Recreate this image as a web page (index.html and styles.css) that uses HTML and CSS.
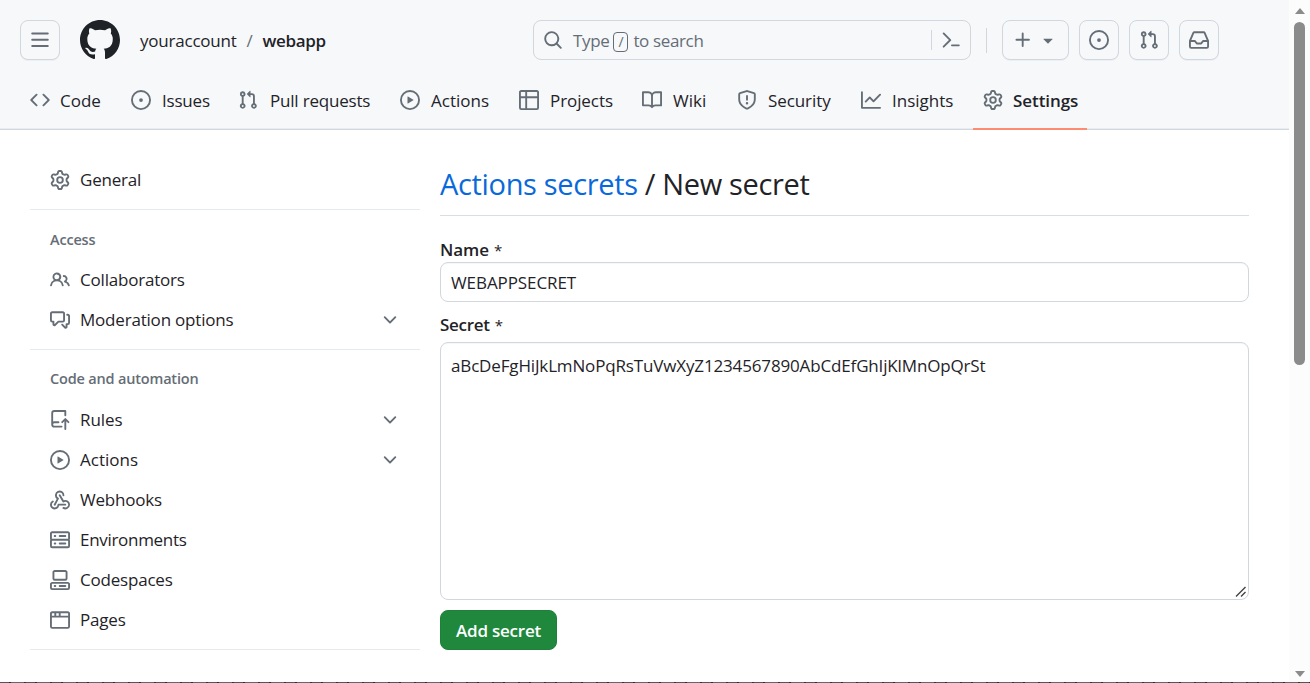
FILE: index.html
```html
<!DOCTYPE html>
<html lang="en">
<head>
<meta charset="utf-8">
<title>New secret</title>
<link rel="stylesheet" href="styles.css">
</head>
<body>
<svg class="sprite" aria-hidden="true">
<symbol id="bars" viewBox="0 0 16 16"><path d="M1 2.75A.75.75 0 0 1 1.75 2h12.5a.75.75 0 0 1 0 1.5H1.75A.75.75 0 0 1 1 2.75Zm0 5A.75.75 0 0 1 1.75 7h12.5a.75.75 0 0 1 0 1.5H1.75A.75.75 0 0 1 1 7.75ZM1.75 12h12.5a.75.75 0 0 1 0 1.5H1.75a.75.75 0 0 1 0-1.5Z"/></symbol>
<symbol id="mark" viewBox="0 0 16 16"><path d="M8 0c4.42 0 8 3.58 8 8a8.013 8.013 0 0 1-5.45 7.59c-.4.08-.55-.17-.55-.38 0-.27.01-1.13.01-2.2 0-.75-.25-1.23-.54-1.48 1.78-.2 3.65-.88 3.65-3.95 0-.88-.31-1.59-.82-2.15.08-.2.36-1.02-.08-2.12 0 0-.67-.22-2.2.82-.64-.18-1.32-.27-2-.27-.68 0-1.36.09-2 .27-1.53-1.03-2.2-.82-2.2-.82-.44 1.1-.16 1.92-.08 2.12-.51.56-.82 1.28-.82 2.15 0 3.06 1.86 3.75 3.64 3.95-.23.2-.44.55-.51 1.07-.46.21-1.61.55-2.33-.66-.15-.24-.6-.83-1.23-.82-.67.01-.27.38.01.53.34.19.73.9.82 1.13.16.45.68 1.31 2.69.94 0 .67.01 1.3.01 1.49 0 .21-.15.45-.55.38A7.995 7.995 0 0 1 0 8c0-4.42 3.58-8 8-8Z"/></symbol>
<symbol id="code" viewBox="0 0 16 16"><path d="m11.28 3.22 4.25 4.25a.75.75 0 0 1 0 1.06l-4.25 4.25a.749.749 0 0 1-1.275-.326.749.749 0 0 1 .215-.734L13.94 8l-3.72-3.72a.749.749 0 0 1 .326-1.275.749.749 0 0 1 .734.215Zm-6.56 0a.751.751 0 0 1 1.042.018.751.751 0 0 1 .018 1.042L2.06 8l3.72 3.72a.749.749 0 0 1-.326 1.275.749.749 0 0 1-.734-.215L.47 8.53a.75.75 0 0 1 0-1.06Z"/></symbol>
<symbol id="issue" viewBox="0 0 16 16"><path d="M8 9.5a1.5 1.5 0 1 0 0-3 1.5 1.5 0 0 0 0 3Z"/><path d="M8 0a8 8 0 1 1 0 16A8 8 0 0 1 8 0ZM1.5 8a6.5 6.5 0 1 0 13 0 6.5 6.5 0 0 0-13 0Z"/></symbol>
<symbol id="pull" viewBox="0 0 16 16"><path d="M1.5 3.25a2.25 2.25 0 1 1 3 2.122v5.256a2.251 2.251 0 1 1-1.5 0V5.372A2.25 2.25 0 0 1 1.5 3.25Zm5.677-.177L9.573.677A.25.25 0 0 1 10 .854V2.5h1A2.5 2.5 0 0 1 13.5 5v5.628a2.251 2.251 0 1 1-1.5 0V5a1 1 0 0 0-1-1h-1v1.646a.25.25 0 0 1-.427.177L7.177 3.427a.25.25 0 0 1 0-.354ZM3.75 2.5a.75.75 0 1 0 0 1.5.75.75 0 0 0 0-1.5Zm0 9.5a.75.75 0 1 0 0 1.5.75.75 0 0 0 0-1.5Zm8.25.75a.75.75 0 1 0 1.5 0 .75.75 0 0 0-1.5 0Z"/></symbol>
<symbol id="play" viewBox="0 0 16 16"><path d="M8 0a8 8 0 1 1 0 16A8 8 0 0 1 8 0ZM1.5 8a6.5 6.5 0 1 0 13 0 6.5 6.5 0 0 0-13 0Zm4.879-2.773 4.264 2.559a.25.25 0 0 1 0 .428l-4.264 2.559A.25.25 0 0 1 6 10.559V5.442a.25.25 0 0 1 .379-.215Z"/></symbol>
<symbol id="table" viewBox="0 0 16 16"><path d="M0 1.75C0 .784.784 0 1.75 0h12.5C15.216 0 16 .784 16 1.75v12.5A1.75 1.75 0 0 1 14.25 16H1.75A1.75 1.75 0 0 1 0 14.25ZM6.5 6.5v8h7.75a.25.25 0 0 0 .25-.25V6.5Zm8-1.5V1.75a.25.25 0 0 0-.25-.25H6.5V5Zm-13 1.5v7.75c0 .138.112.25.25.25H5v-8ZM5 5V1.5H1.75a.25.25 0 0 0-.25.25V5Z"/></symbol>
<symbol id="book" viewBox="0 0 16 16"><path d="M0 1.75A.75.75 0 0 1 .75 1h4.253c1.227 0 2.317.59 3 1.501A3.743 3.743 0 0 1 11.006 1h4.245a.75.75 0 0 1 .75.75v10.5a.75.75 0 0 1-.75.75h-4.507a2.25 2.25 0 0 0-1.591.659l-.622.621a.75.75 0 0 1-1.06 0l-.622-.621A2.25 2.25 0 0 0 5.258 13H.75a.75.75 0 0 1-.75-.75Zm7.251 10.324.004-5.073-.002-2.253A2.25 2.25 0 0 0 5.003 2.5H1.5v9h3.757a3.75 3.75 0 0 1 1.994.574ZM8.755 4.75l-.004 7.322a3.752 3.752 0 0 1 1.992-.572H14.5v-9h-3.495a2.25 2.25 0 0 0-2.25 2.25Z"/></symbol>
<symbol id="shield" viewBox="0 0 16 16"><path d="M7.467.133a1.748 1.748 0 0 1 1.066 0l5.25 1.68A1.75 1.75 0 0 1 15 3.48V7c0 1.566-.32 3.182-1.303 4.682-.983 1.498-2.585 2.813-5.032 3.855a1.697 1.697 0 0 1-1.33 0c-2.447-1.042-4.049-2.357-5.032-3.855C1.32 10.182 1 8.566 1 7V3.48a1.755 1.755 0 0 1 1.217-1.667Zm.61 1.429a.25.25 0 0 0-.153 0l-5.25 1.68a.25.25 0 0 0-.174.238V7c0 1.358.275 2.666 1.057 3.86.784 1.194 2.121 2.34 4.366 3.297a.196.196 0 0 0 .154 0c2.245-.956 3.582-2.104 4.366-3.298C13.225 9.666 13.5 8.36 13.5 7V3.48a.251.251 0 0 0-.174-.237l-5.25-1.68ZM8.75 4.75v3a.75.75 0 0 1-1.5 0v-3a.75.75 0 0 1 1.5 0ZM9 10.5a1 1 0 1 1-2 0 1 1 0 0 1 2 0Z"/></symbol>
<symbol id="graph" viewBox="0 0 16 16"><path d="M1.5 1.75V13.5h13.75a.75.75 0 0 1 0 1.5H.75a.75.75 0 0 1-.75-.75V1.75a.75.75 0 0 1 1.5 0Zm14.28 2.53-5.25 5.25a.75.75 0 0 1-1.06 0L7 7.06 4.28 9.78a.751.751 0 0 1-1.042-.018.751.751 0 0 1-.018-1.042l3.25-3.25a.75.75 0 0 1 1.06 0L10 7.94l4.72-4.72a.751.751 0 0 1 1.042.018.751.751 0 0 1 .018 1.042Z"/></symbol>
<symbol id="gear" viewBox="0 0 16 16"><path d="M8 0a8.2 8.2 0 0 1 .701.031C9.444.095 9.99.645 10.16 1.29l.288 1.107c.018.066.079.158.212.224.231.114.454.243.668.386.123.082.233.09.299.071l1.103-.303c.644-.176 1.392.021 1.82.63.27.385.506.792.704 1.218.315.675.111 1.422-.364 1.891l-.814.806c-.049.048-.098.147-.088.294.016.257.016.515 0 .772-.01.147.038.246.088.294l.814.806c.475.469.679 1.216.364 1.891a7.977 7.977 0 0 1-.704 1.217c-.428.61-1.176.807-1.82.63l-1.102-.302c-.067-.019-.177-.011-.3.071a5.909 5.909 0 0 1-.668.386c-.133.066-.194.158-.211.224l-.29 1.106c-.168.646-.715 1.196-1.458 1.26a8.006 8.006 0 0 1-1.402 0c-.743-.064-1.289-.614-1.458-1.26l-.289-1.106c-.018-.066-.079-.158-.212-.224a5.738 5.738 0 0 1-.668-.386c-.123-.082-.233-.09-.299-.071l-1.103.303c-.644.176-1.392-.021-1.82-.63a8.12 8.12 0 0 1-.704-1.218c-.315-.675-.111-1.422.363-1.891l.815-.806c.05-.048.098-.147.088-.294a6.214 6.214 0 0 1 0-.772c.01-.147-.038-.246-.088-.294l-.815-.806C.635 6.045.431 5.298.746 4.623a7.92 7.92 0 0 1 .704-1.217c.428-.61 1.176-.807 1.82-.63l1.102.302c.067.019.177.011.3-.071.214-.143.437-.272.668-.386.133-.066.194-.158.211-.224l.29-1.106C6.009.645 6.556.095 7.299.03 7.53.01 7.764 0 8 0Zm-.571 1.525c-.036.003-.108.036-.137.146l-.289 1.105c-.147.561-.549.967-.998 1.189-.173.086-.34.183-.5.29-.417.278-.97.423-1.529.27l-1.103-.303c-.109-.03-.175.016-.195.045-.22.312-.412.644-.573.99-.014.031-.021.11.059.19l.815.806c.411.406.562.957.53 1.456a4.709 4.709 0 0 0 0 .582c.032.499-.119 1.05-.53 1.456l-.815.806c-.081.08-.073.159-.059.19.162.346.353.677.573.989.02.03.085.076.195.046l1.102-.303c.56-.153 1.113-.008 1.53.27.161.107.328.204.501.29.447.222.85.629.997 1.189l.289 1.105c.029.109.101.143.137.146a6.6 6.6 0 0 0 1.142 0c.036-.003.108-.036.137-.146l.289-1.105c.147-.561.549-.967.998-1.189.173-.086.34-.183.5-.29.417-.278.97-.423 1.529-.27l1.103.303c.109.029.175-.016.195-.045.22-.313.411-.644.573-.99.014-.031.021-.11-.059-.19l-.815-.806c-.411-.406-.562-.957-.53-1.456a4.709 4.709 0 0 0 0-.582c-.032-.499.119-1.05.53-1.456l.815-.806c.081-.08.073-.159.059-.19a6.464 6.464 0 0 0-.573-.989c-.02-.03-.085-.076-.195-.046l-1.102.303c-.56.153-1.113.008-1.53-.27a4.44 4.44 0 0 0-.501-.29c-.447-.222-.85-.629-.997-1.189l-.289-1.105c-.029-.11-.101-.143-.137-.146a6.6 6.6 0 0 0-1.142 0ZM11 8a3 3 0 1 1-6 0 3 3 0 0 1 6 0ZM9.5 8a1.5 1.5 0 1 0-3.001.001A1.5 1.5 0 0 0 9.5 8Z"/></symbol>
<symbol id="search" viewBox="0 0 16 16"><path d="M10.68 11.74a6 6 0 0 1-7.922-8.982 6 6 0 0 1 8.982 7.922l3.04 3.04a.749.749 0 0 1-.326 1.275.749.749 0 0 1-.734-.215ZM11.5 7a4.499 4.499 0 1 0-8.997 0A4.499 4.499 0 0 0 11.5 7Z"/></symbol>
<symbol id="prompt" viewBox="0 0 16 16"><path d="m6.354 8.04-4.773 4.773a.75.75 0 1 0 1.061 1.06L7.945 8.57a.75.75 0 0 0 0-1.06L2.642 2.206a.75.75 0 0 0-1.06 1.061L6.353 8.04ZM8.75 11.5a.75.75 0 0 0 0 1.5h5.5a.75.75 0 0 0 0-1.5h-5.5Z"/></symbol>
<symbol id="plus" viewBox="0 0 16 16"><path d="M7.75 2a.75.75 0 0 1 .75.75V7h4.25a.75.75 0 0 1 0 1.5H8.5v4.25a.75.75 0 0 1-1.5 0V8.5H2.75a.75.75 0 0 1 0-1.5H7V2.75A.75.75 0 0 1 7.75 2Z"/></symbol>
<symbol id="caret" viewBox="0 0 16 16"><path d="m4.427 7.427 3.396 3.396a.25.25 0 0 0 .354 0l3.396-3.396A.25.25 0 0 0 11.396 7H4.604a.25.25 0 0 0-.177.427Z"/></symbol>
<symbol id="inbox" viewBox="0 0 16 16"><path d="M2.8 2.06A1.75 1.75 0 0 1 4.41 1h7.18c.7 0 1.333.417 1.61 1.06l2.74 6.395c.04.093.06.194.06.295v4.5A1.75 1.75 0 0 1 14.25 15H1.75A1.75 1.75 0 0 1 0 13.25v-4.5c0-.101.02-.202.06-.295Zm1.61.44a.25.25 0 0 0-.23.152L1.887 8H4.75a.75.75 0 0 1 .6.3L6.625 10h2.75l1.275-1.7a.75.75 0 0 1 .6-.3h2.863L11.82 2.652a.25.25 0 0 0-.23-.152Zm10.09 7h-2.875l-1.275 1.7a.75.75 0 0 1-.6.3h-3.5a.75.75 0 0 1-.6-.3L4.375 9.5H1.5v3.75c0 .138.112.25.25.25h12.5a.25.25 0 0 0 .25-.25Z"/></symbol>
<symbol id="people" viewBox="0 0 16 16"><path d="M2 5.5a3.5 3.5 0 1 1 5.898 2.549 5.508 5.508 0 0 1 3.034 4.084.75.75 0 1 1-1.482.235 4 4 0 0 0-7.9 0 .75.75 0 0 1-1.482-.236A5.507 5.507 0 0 1 3.102 8.05 3.493 3.493 0 0 1 2 5.5ZM11 4a3.001 3.001 0 0 1 2.22 5.018 5.01 5.01 0 0 1 2.56 3.012.749.749 0 0 1-.885.954.752.752 0 0 1-.549-.514 3.507 3.507 0 0 0-2.522-2.372.75.75 0 0 1-.574-.73v-.352a.75.75 0 0 1 .416-.672A1.5 1.5 0 0 0 11 5.5.75.75 0 0 1 11 4Zm-5.5-.5a2 2 0 1 0-.001 3.999A2 2 0 0 0 5.5 3.5Z"/></symbol>
<symbol id="discussion" viewBox="0 0 16 16"><path d="M1.75 1h8.5c.966 0 1.75.784 1.75 1.75v5.5A1.75 1.75 0 0 1 10.25 10H7.061l-2.574 2.573A1.458 1.458 0 0 1 2 11.543V10h-.25A1.75 1.75 0 0 1 0 8.25v-5.5C0 1.784.784 1 1.75 1ZM1.5 2.75v5.5c0 .138.112.25.25.25h1a.75.75 0 0 1 .75.75v2.19l2.72-2.72a.749.749 0 0 1 .53-.22h3.5a.25.25 0 0 0 .25-.25v-5.5a.25.25 0 0 0-.25-.25h-8.5a.25.25 0 0 0-.25.25Zm13 2a.25.25 0 0 0-.25-.25h-.5a.75.75 0 0 1 0-1.5h.5c.966 0 1.75.784 1.75 1.75v5.5A1.75 1.75 0 0 1 14.25 12H14v1.543a1.458 1.458 0 0 1-2.487 1.03L9.22 12.28a.749.749 0 0 1 .326-1.275.749.749 0 0 1 .734.215l2.22 2.22v-2.19a.75.75 0 0 1 .75-.75h1a.25.25 0 0 0 .25-.25Z"/></symbol>
<symbol id="push" viewBox="0 0 16 16"><path d="M1 2.5A2.5 2.5 0 0 1 3.5 0h8.75a.75.75 0 0 1 .75.75v3.5a.75.75 0 0 1-1.5 0V1.5h-8a1 1 0 0 0-1 1v6.708A2.493 2.493 0 0 1 3.5 9h3.25a.75.75 0 0 1 0 1.5H3.5a1 1 0 0 0 0 2h5.75a.75.75 0 0 1 0 1.5H3.5A2.5 2.5 0 0 1 1 11.5Zm13.23 7.79h-.001l-1.224-1.224v6.184a.75.75 0 0 1-1.5 0V9.066L10.28 10.29a.75.75 0 0 1-1.06-1.061l2.505-2.504a.75.75 0 0 1 1.06 0L15.29 9.23a.751.751 0 0 1-.018 1.042.751.751 0 0 1-1.042.018Z"/></symbol>
<symbol id="webhook" viewBox="0 0 16 16"><path d="M5.5 4.25a2.25 2.25 0 0 1 4.5 0 .75.75 0 0 0 1.5 0 3.75 3.75 0 1 0-6.14 2.889l-2.272 4.258a.75.75 0 0 0 1.324.706L7 7.25a.75.75 0 0 0-.309-1.015A2.25 2.25 0 0 1 5.5 4.25Z"/><path d="M7.364 3.607a.75.75 0 0 1 1.03.257l2.608 4.349a3.75 3.75 0 1 1-.628 6.785.75.75 0 0 1 .752-1.299 2.25 2.25 0 1 0-.033-3.88.75.75 0 0 1-1.03-.256L7.107 4.636a.75.75 0 0 1 .257-1.03Z"/><path d="M2.9 8.776A.75.75 0 0 1 2.625 9.8 2.25 2.25 0 1 0 6 11.75a.75.75 0 0 1 .75-.751h5.5a.75.75 0 0 1 0 1.5H7.425a3.751 3.751 0 1 1-5.55-3.998.75.75 0 0 1 1.024.274Z"/></symbol>
<symbol id="server" viewBox="0 0 16 16"><path d="M1.75 1h12.5c.966 0 1.75.784 1.75 1.75v4c0 .372-.116.717-.314 1 .198.283.314.628.314 1v4a1.75 1.75 0 0 1-1.75 1.75H1.75A1.75 1.75 0 0 1 0 12.75v-4c0-.358.109-.707.314-1a1.739 1.739 0 0 1-.314-1v-4C0 1.784.784 1 1.75 1ZM1.5 2.75v4c0 .138.112.25.25.25h12.5a.25.25 0 0 0 .25-.25v-4a.25.25 0 0 0-.25-.25H1.75a.25.25 0 0 0-.25.25Zm.25 5.75a.25.25 0 0 0-.25.25v4c0 .138.112.25.25.25h12.5a.25.25 0 0 0 .25-.25v-4a.25.25 0 0 0-.25-.25ZM7 4.75A.75.75 0 0 1 7.75 4h4.5a.75.75 0 0 1 0 1.5h-4.5A.75.75 0 0 1 7 4.75ZM7.75 10h4.5a.75.75 0 0 1 0 1.5h-4.5a.75.75 0 0 1 0-1.5ZM3 4.75A.75.75 0 0 1 3.75 4h.5a.75.75 0 0 1 0 1.5h-.5A.75.75 0 0 1 3 4.75ZM3.75 10h.5a.75.75 0 0 1 0 1.5h-.5a.75.75 0 0 1 0-1.5Z"/></symbol>
<symbol id="codespaces" viewBox="0 0 16 16"><path d="M0 11.25c0-.966.784-1.75 1.75-1.75h12.5c.966 0 1.75.784 1.75 1.75v3A1.75 1.75 0 0 1 14.25 16H1.75A1.75 1.75 0 0 1 0 14.25Zm2-9.5C2 .784 2.784 0 3.75 0h8.5C13.216 0 14 .784 14 1.75v5a1.75 1.75 0 0 1-1.75 1.75h-8.5A1.75 1.75 0 0 1 2 6.75Zm1.75-.25a.25.25 0 0 0-.25.25v5c0 .138.112.25.25.25h8.5a.25.25 0 0 0 .25-.25v-5a.25.25 0 0 0-.25-.25Zm-2 9.5a.25.25 0 0 0-.25.25v3c0 .138.112.25.25.25h12.5a.25.25 0 0 0 .25-.25v-3a.25.25 0 0 0-.25-.25Z"/><path d="M7 12.75a.75.75 0 0 1 .75-.75h4.5a.75.75 0 0 1 0 1.5h-4.5a.75.75 0 0 1-.75-.75Zm-4 0a.75.75 0 0 1 .75-.75h.5a.75.75 0 0 1 0 1.5h-.5a.75.75 0 0 1-.75-.75Z"/></symbol>
<symbol id="browser" viewBox="0 0 16 16"><path d="M0 2.75C0 1.784.784 1 1.75 1h12.5c.966 0 1.75.784 1.75 1.75v10.5A1.75 1.75 0 0 1 14.25 15H1.75A1.75 1.75 0 0 1 0 13.25ZM14.5 6h-13v7.25c0 .138.112.25.25.25h12.5a.25.25 0 0 0 .25-.25Zm-6-3.5v2h6V2.75a.25.25 0 0 0-.25-.25ZM5 2.5v2h2v-2Zm-3.25 0a.25.25 0 0 0-.25.25V4.5h2v-2Z"/></symbol>
<symbol id="chevron" viewBox="0 0 16 16"><path d="M12.78 5.22a.749.749 0 0 1 0 1.06l-4.25 4.25a.749.749 0 0 1-1.06 0L3.22 6.28a.749.749 0 1 1 1.06-1.06L8 8.939l3.72-3.719a.749.749 0 0 1 1.06 0Z"/></symbol>
</svg>
<div class="window">
  <div class="page">
    <header class="header">
      <div class="topbar">
        <button class="btn"><svg class="icon"><use href="#bars"/></svg></button>
        <svg class="logo"><use href="#mark"/></svg>
        <div class="crumbs"><a class="owner">youraccount</a><span class="sep">/</span><a class="repo">webapp</a></div>
        <div class="search">
          <svg class="icon"><use href="#search"/></svg>
          <span class="hint"><span>Type</span><kbd>/</kbd><span>to search</span></span>
          <span class="rule"></span>
          <svg class="icon"><use href="#prompt"/></svg>
        </div>
        <span class="divider"></span>
        <div class="actions">
          <button class="btn create"><svg class="icon"><use href="#plus"/></svg><svg class="icon"><use href="#caret"/></svg></button>
          <button class="btn"><svg class="icon"><use href="#issue"/></svg></button>
          <button class="btn"><svg class="icon"><use href="#pull"/></svg></button>
          <button class="btn"><svg class="icon"><use href="#inbox"/></svg></button>
        </div>
      </div>
      <nav class="tabs">
        <a class="tab"><svg class="icon"><use href="#code"/></svg><span>Code</span></a>
        <a class="tab"><svg class="icon"><use href="#issue"/></svg><span class="tight">Issues</span></a>
        <a class="tab"><svg class="icon"><use href="#pull"/></svg><span class="tight">Pull requests</span></a>
        <a class="tab"><svg class="icon"><use href="#play"/></svg><span>Actions</span></a>
        <a class="tab"><svg class="icon"><use href="#table"/></svg><span class="snug">Projects</span></a>
        <a class="tab"><svg class="icon"><use href="#book"/></svg><span>Wiki</span></a>
        <a class="tab"><svg class="icon"><use href="#shield"/></svg><span class="snug">Security</span></a>
        <a class="tab"><svg class="icon"><use href="#graph"/></svg><span>Insights</span></a>
        <a class="tab current"><svg class="icon"><use href="#gear"/></svg><span class="snug">Settings</span></a>
      </nav>
    </header>
    <div class="layout">
      <aside class="sidebar">
        <section class="group">
          <a class="item"><svg class="icon"><use href="#gear"/></svg><span class="tight">General</span></a>
        </section>
        <section class="group">
          <h3 class="heading">Access</h3>
          <a class="item"><svg class="icon"><use href="#people"/></svg><span class="tight">Collaborators</span></a>
          <a class="item"><svg class="icon"><use href="#discussion"/></svg><span class="tight">Moderation options</span><svg class="icon chev"><use href="#chevron"/></svg></a>
        </section>
        <section class="group">
          <h3 class="heading raised">Code and automation</h3>
          <a class="item"><svg class="icon"><use href="#push"/></svg><span class="snug">Rules</span><svg class="icon chev"><use href="#chevron"/></svg></a>
          <a class="item"><svg class="icon"><use href="#play"/></svg><span>Actions</span><svg class="icon chev"><use href="#chevron"/></svg></a>
          <a class="item"><svg class="icon"><use href="#webhook"/></svg><span class="tight">Webhooks</span></a>
          <a class="item"><svg class="icon"><use href="#server"/></svg><span class="tighter">Environments</span></a>
          <a class="item"><svg class="icon"><use href="#codespaces"/></svg><span class="tight">Codespaces</span></a>
          <a class="item"><svg class="icon"><use href="#browser"/></svg><span class="tight">Pages</span></a>
        </section>
      </aside>
      <main class="main">
        <h1 class="title"><a>Actions secrets</a> / New secret</h1>
        <div class="label name"><span class="snug">Name</span><span class="star">*</span></div>
        <div class="field"><span class="snug">WEBAPPSECRET</span></div>
        <div class="label secret"><span class="tighter">Secret</span><span class="star">*</span></div>
        <div class="area"><span class="token">aBcDeFgHiJkLmNoPqRsTuVwXyZ1234567890AbCdEfGhIjKlMnOpQrSt</span>
          <svg class="grip" viewBox="0 0 12 12"><path d="M1 10.5 10.5 1M6 10.5 10.5 6"/></svg>
        </div>
        <button class="submit">Add secret</button>
      </main>
    </div>
  </div>
  <div class="scrollbar"><i class="up"></i><i class="thumb"></i><i class="down"></i></div>
</div>
<div class="edge"></div>
</body>
</html>
```

FILE: styles.css
```css
* { box-sizing: border-box; }
body {
  margin: 0;
  width: 1310px;
  height: 683px;
  overflow: hidden;
  background: #fff;
  color: #1f2328;
  font: 17px/26px "Open Sans", "Noto Sans", sans-serif;
}
.sprite { display: none; }
.snug { letter-spacing: -.08px; }
.tight { letter-spacing: -.2px; }
.tighter { letter-spacing: -.3px; }
.icon { width: 20px; height: 20px; flex: none; fill: #656d76; }
.window { display: flex; height: 682px; }
.page { width: 1289px; }

.header {
  height: 130px;
  padding-top: 20px;
  background: #f6f8fa;
  border-bottom: 1px solid #d0d7de;
  box-shadow: inset 0 -1px #e9edf0;
}
.topbar { display: flex; height: 40px; padding-left: 20px; }
.btn {
  display: flex;
  align-items: center;
  justify-content: center;
  width: 40px;
  height: 40px;
  padding: 0;
  border: 1px solid #d0d7de;
  border-radius: 8px;
  background: #f6f8fa;
  box-shadow: 0 1px 0 rgba(31, 35, 40, .04);
}
.logo { width: 40px; height: 40px; margin: 0 20px; fill: #1f2328; }
.crumbs { display: flex; width: 393px; padding-top: 8px; letter-spacing: -.22px; }
.sep { margin: 0 10px; color: #656d76; }
.repo { font-weight: 600; letter-spacing: -.35px; }
.search {
  display: flex;
  align-items: center;
  width: 438px;
  padding: 0 9px;
  border: 1px solid #d0d7de;
  border-radius: 8px;
  color: #656d76;
}
.hint { display: flex; flex: 1; padding: 1px 0 0 10px; letter-spacing: -.36px; }
kbd {
  width: 15px;
  height: 20px;
  margin: 4px 5px 0 4px;
  border: 1px solid #656d76;
  border-radius: 4px;
  font: 14px/18px "Open Sans", sans-serif;
  text-align: center;
}
.rule { width: 1px; height: 20px; margin-right: 9px; background: #d0d7de; }
.divider { width: 1px; height: 25px; margin: 8px 15px 0; background: #d0d7de; }
.actions { display: flex; gap: 10px; }
.create { width: 67px; gap: 5px; }

.tabs {
  display: grid;
  grid-template-columns: 101px 107px 162px 119px 123px 95px 124px 122px 114px;
  height: 70px;
  padding-left: 20px;
}
.tab { display: flex; gap: 11px; height: 70px; padding: 30px 0 0 10px; }
.tab span { margin-top: -2px; }
.tab:first-child, .current { gap: 10px; }
.tab:nth-child(3) { gap: 12px; }
.current { font-weight: 600; border-bottom: 2px solid #fd8c73; }

.layout { display: flex; padding: 30px 40px 0 30px; }
.sidebar { width: 390px; margin-right: 20px; }
.group { border-bottom: 1px solid #e7eaed; padding-bottom: 9px; margin-bottom: 10px; }
.item { display: flex; align-items: center; gap: 10px; height: 40px; padding: 0 20px; }
.chev { margin-left: auto; }
.heading { height: 40px; margin: 0; padding: 8px 20px 0; color: #656d76; font-size: 14.5px; font-weight: 600; line-height: 24px; letter-spacing: -.18px; }
.raised { padding-top: 7px; }
.main { width: 809px; }
.title { height: 56px; margin: 0 0 20px; padding-top: 4px; border-bottom: 1px solid #d8dee4; font-size: 29px; font-weight: 400; line-height: 40px; letter-spacing: -.34px; }
.title a { color: #0969da; }
.label { display: flex; gap: 5px; font-weight: 600; }
.name { padding-top: 1px; height: 26px; }
.star { font-weight: 400; font-size: 15px; }
.field { height: 40px; padding: 7px 10px; border: 1px solid #d0d7de; border-radius: 8px; box-shadow: inset 0 1px 0 rgba(208, 215, 222, .2); }
.secret { margin: 10px 0 4px; }
.area { position: relative; height: 258px; padding: 10px; border: 1px solid #d0d7de; border-radius: 8px; box-shadow: inset 0 1px 0 rgba(208, 215, 222, .2); }
.token { letter-spacing: -.15px; }
.grip { position: absolute; right: 1px; bottom: 1px; width: 12px; height: 12px; fill: none; stroke: #444; stroke-width: 1.4; }
.submit { display: block; height: 40px; width: 117px; margin-top: 10px; padding: 1px 0 0; border: 1px solid #1f803a; border-radius: 8px; background: #1f883d; color: #fff; font: 600 17px/26px "Open Sans", sans-serif; letter-spacing: -.22px; }

.scrollbar { display: flex; flex-direction: column; align-items: center; width: 21px; padding: 8px 0 5px; background: #fcfcfc; }
.up, .down { border: 5px solid transparent; }
.up { border-top: 0; border-bottom: 6px solid #8b8b8b; }
.down { margin-top: auto; border-bottom: 0; border-top: 6px solid #8b8b8b; }
.thumb { width: 11px; height: 343px; margin-top: 8px; border-radius: 6px; background: #8b8b8b; }
.edge { height: 1px; background: repeating-linear-gradient(90deg, #555 0 9px, #2c2c2c 9px 11px, #666 11px 24px, #333 24px 26px); }
```
